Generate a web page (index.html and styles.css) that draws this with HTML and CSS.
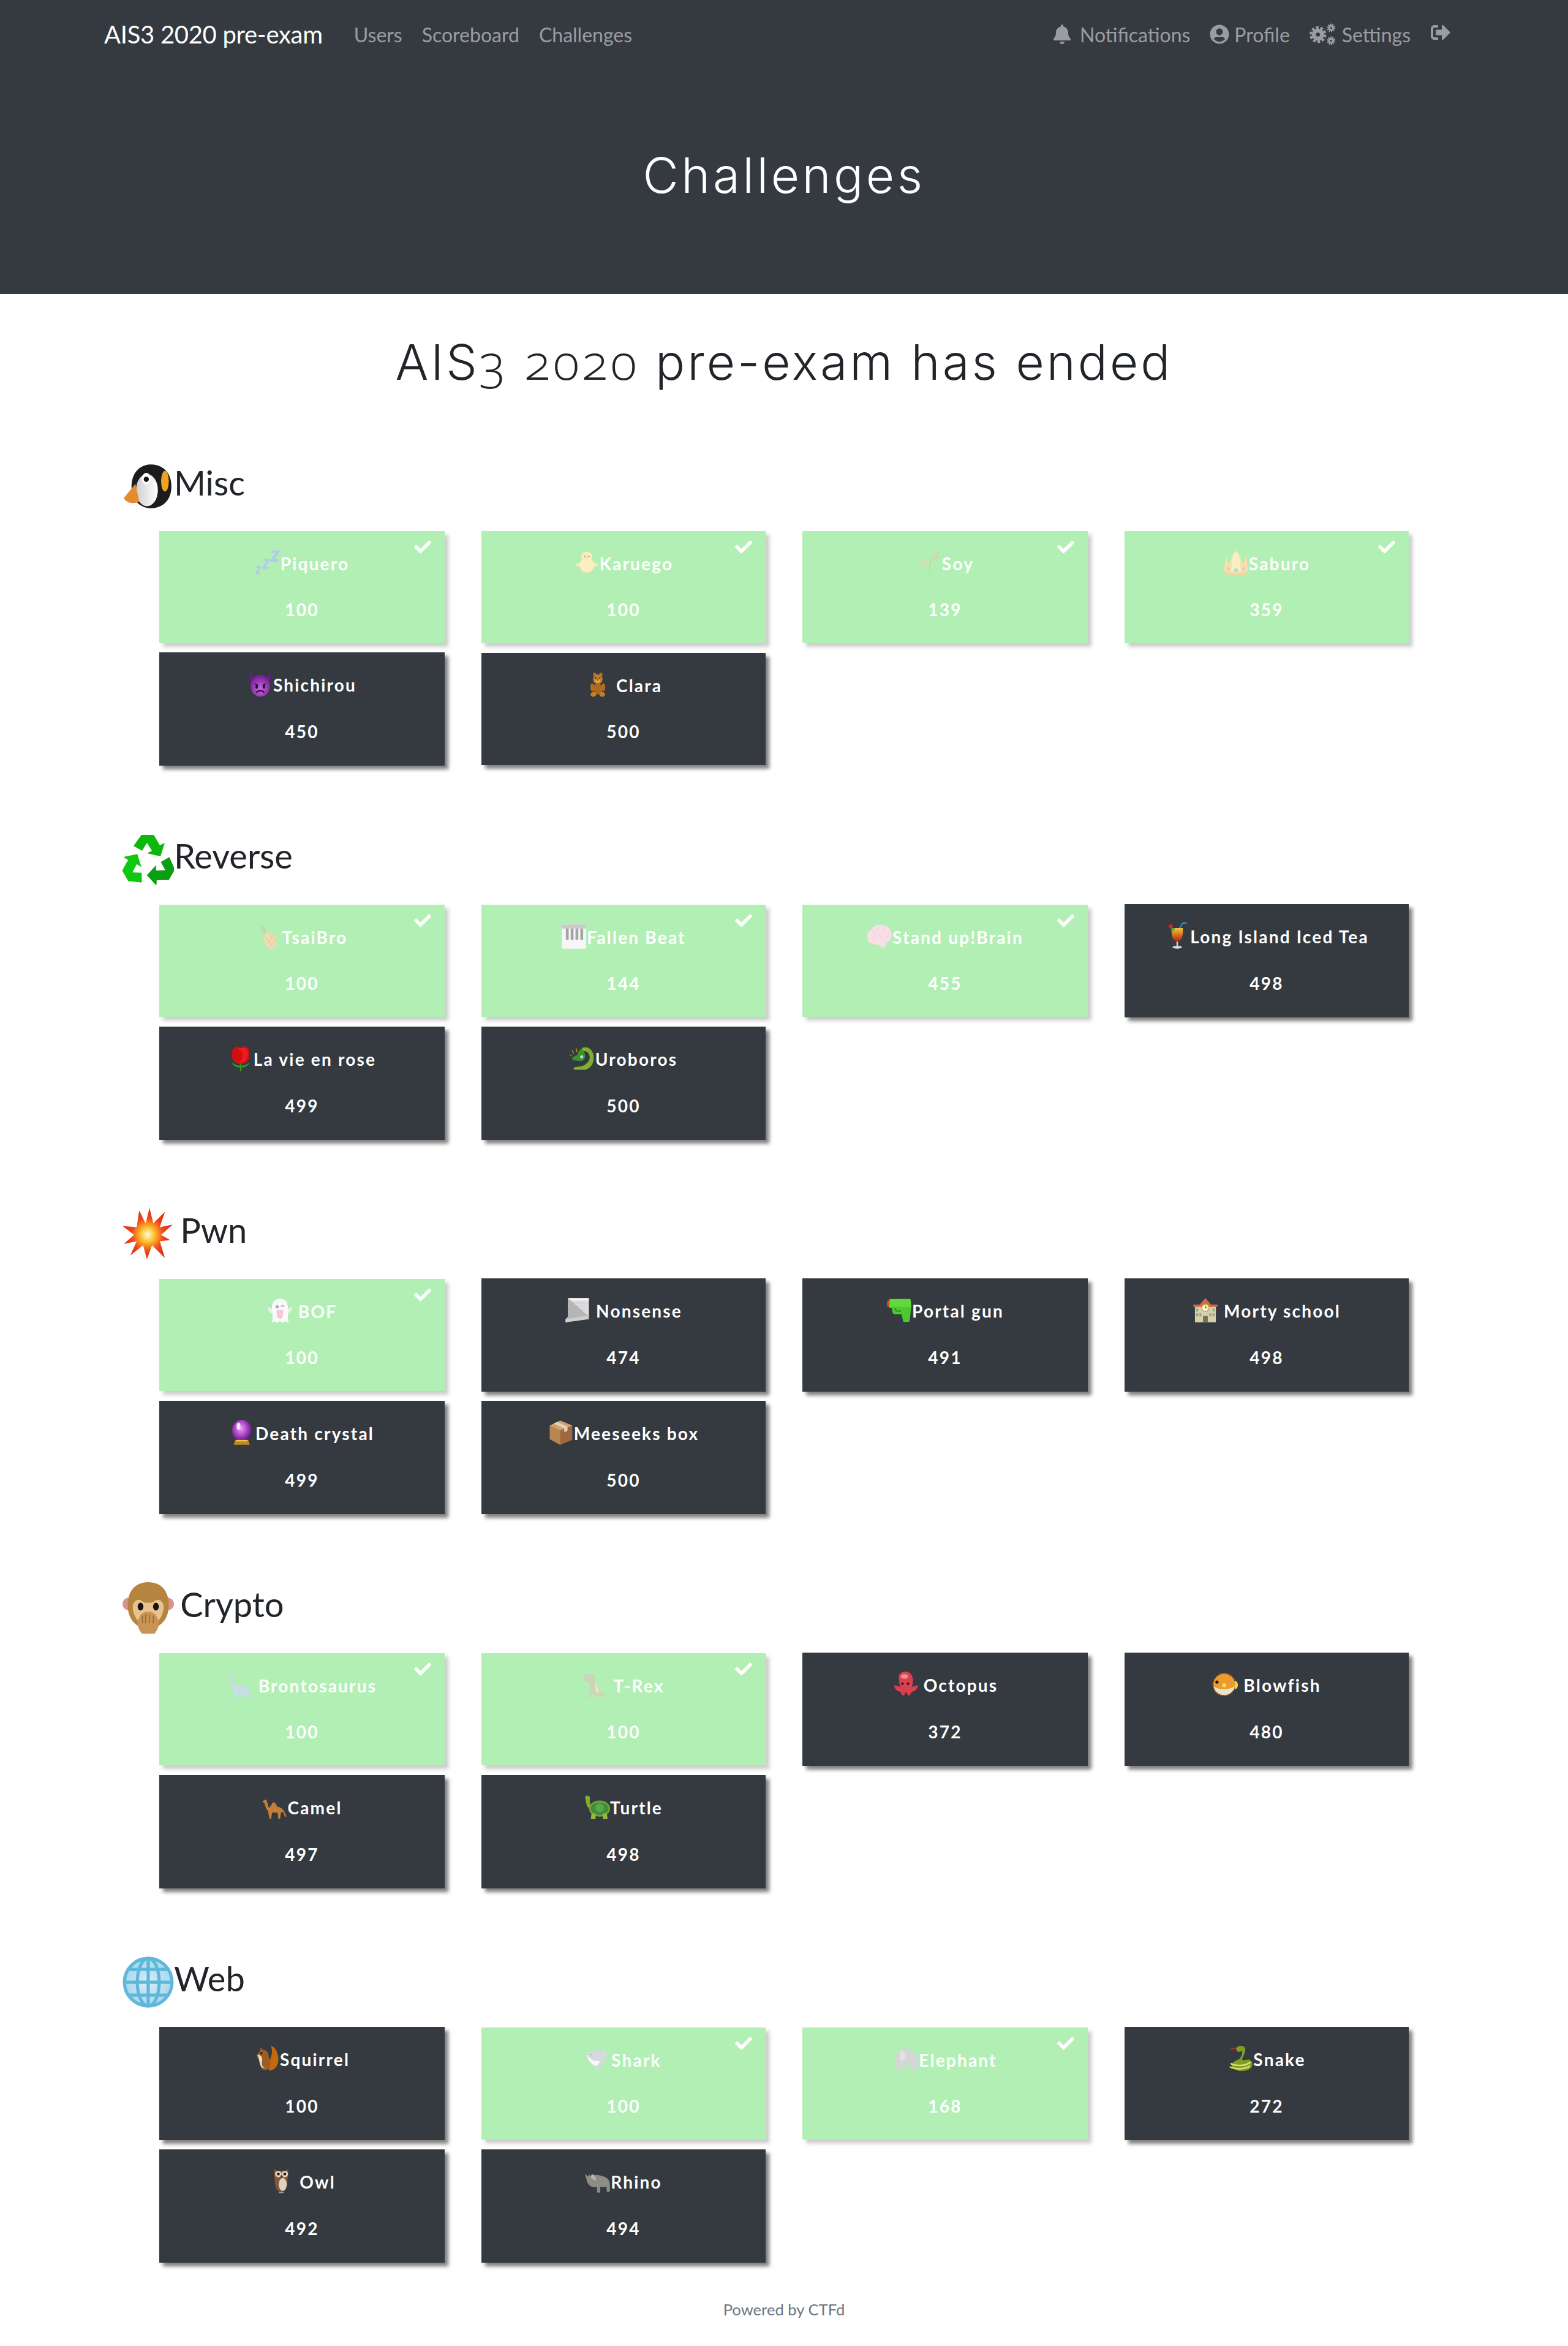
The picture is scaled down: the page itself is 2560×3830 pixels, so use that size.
FILE: index.html
```html
<!DOCTYPE html>
<html lang="en">

<head>
    <meta charset="UTF-8">
    <meta name="viewport" content="width=device-width, initial-scale=1.0">
    <title>Challenges</title>
    <link rel="stylesheet" href="styles.css">
</head>

<body>
    <svg class="sprites" xmlns="http://www.w3.org/2000/svg">
        <defs>
            <radialGradient id="gBall" cx="0.45" cy="0.4" r="0.6"><stop offset="0" stop-color="#e9a4ee"/><stop offset="0.6" stop-color="#a53cc0"/><stop offset="1" stop-color="#5a1a7c"/></radialGradient>
            <radialGradient id="gImp" cx="0.5" cy="0.65" r="0.6"><stop offset="0" stop-color="#c767d8"/><stop offset="1" stop-color="#7a1f9a"/></radialGradient>
            <linearGradient id="gDrink" x1="0" y1="0" x2="0" y2="1"><stop offset="0" stop-color="#f6c63a"/><stop offset="1" stop-color="#b3200c"/></linearGradient>
            <radialGradient id="gBoom" cx="0.5" cy="0.52" r="0.5"><stop offset="0" stop-color="#fffbe0"/><stop offset="0.28" stop-color="#fcc22c"/><stop offset="0.65" stop-color="#f0431a"/><stop offset="1" stop-color="#e22a12"/></radialGradient>
            <radialGradient id="gGlobe" cx="0.5" cy="0.5" r="0.55"><stop offset="0" stop-color="#d5edf7"/><stop offset="1" stop-color="#a5d6ec"/></radialGradient>
            <linearGradient id="gBelly" x1="0" y1="0" x2="1" y2="0"><stop offset="0" stop-color="#cfcfcf"/><stop offset="1" stop-color="#ffffff"/></linearGradient>
        </defs>
        <symbol id="i-check" viewBox="0 0 512 512"><path fill="currentColor" d="M173.898 439.404l-166.4-166.4c-9.997-9.997-9.997-26.206 0-36.204l36.203-36.204c9.997-9.998 26.207-9.998 36.204 0L192 312.69 432.095 72.596c9.997-9.997 26.207-9.997 36.204 0l36.203 36.204c9.997 9.997 9.997 26.206 0 36.204l-294.4 294.401c-9.998 9.997-26.207 9.997-36.204-.001z"/></symbol>
        <symbol id="i-bell" viewBox="0 0 448 512"><path fill="currentColor" d="M224 512c35.32 0 63.97-28.65 63.97-64H160.03c0 35.35 28.65 64 63.97 64zm215.39-149.71c-19.32-20.76-55.47-51.99-55.47-154.29 0-77.7-54.48-139.9-127.94-155.16V32c0-17.67-14.32-32-31.98-32s-31.98 14.33-31.98 32v20.84C118.56 68.1 64.08 130.3 64.08 208c0 102.3-36.15 133.53-55.47 154.29-6 6.45-8.66 14.16-8.61 21.71.11 16.4 12.98 32 32.1 32h383.8c19.12 0 32-15.6 32.1-32 .05-7.55-2.61-15.27-8.61-21.71z"/></symbol>
        <symbol id="i-user" viewBox="0 0 496 512"><path fill="currentColor" d="M248 8C111 8 0 119 0 256s111 248 248 248 248-111 248-248S385 8 248 8zm0 96c48.6 0 88 39.4 88 88s-39.4 88-88 88-88-39.4-88-88 39.4-88 88-88zm0 344c-58.7 0-111.3-26.6-146.5-68.2 18.8-35.4 55.6-59.8 98.5-59.8 2.4 0 4.8.4 7.1 1.1 13 4.2 26.6 6.9 40.9 6.9 14.3 0 28-2.7 40.9-6.9 2.3-.7 4.7-1.1 7.1-1.1 42.9 0 79.7 24.4 98.5 59.8C359.3 421.4 306.7 448 248 448z"/></symbol>
        <symbol id="i-cogs" viewBox="0 0 80 64"><g fill="none" stroke="currentColor"><circle cx="25" cy="33" r="12" stroke-width="12"/><circle cx="25" cy="33" r="21" stroke-width="8" stroke-dasharray="8 5.2"/><circle cx="64" cy="13" r="6" stroke-width="6"/><circle cx="64" cy="13" r="10.5" stroke-width="4.5" stroke-dasharray="3.6 2.9"/><circle cx="64" cy="51" r="6" stroke-width="6"/><circle cx="64" cy="51" r="10.5" stroke-width="4.5" stroke-dasharray="3.6 2.9"/></g></symbol>
        <symbol id="i-logout" viewBox="0 0 512 512"><path fill="currentColor" d="M497 273L329 441c-15 15-41 4.5-41-17v-96H152c-13.3 0-24-10.7-24-24v-96c0-13.3 10.7-24 24-24h136V88c0-21.4 25.9-32 41-17l168 168c9.3 9.4 9.3 24.6 0 34zM192 436v-40c0-6.6-5.4-12-12-12H96c-17.7 0-32-14.3-32-32V160c0-17.7 14.3-32 32-32h84c6.6 0 12-5.4 12-12V76c0-6.6-5.4-12-12-12H96c-53 0-96 43-96 96v192c0 53 43 96 96 96h84c6.6 0 12-5.4 12-12z"/></symbol>

        <symbol id="e-penguin" viewBox="0 0 80 68"><path d="M14 34C14 12 28 0 44 0c18 0 32 12 32 34S62 68 44 68C28 68 14 56 14 34z" fill="#1c1c1e"/><ellipse cx="38" cy="40" rx="17" ry="25" fill="url(#gBelly)"/><ellipse cx="37" cy="22" rx="7" ry="9" fill="#fff"/><circle cx="37" cy="23" r="4" fill="#111"/><ellipse cx="66" cy="26" rx="6" ry="16" fill="#f0a21e"/><path d="M20 30L2 52c4 8 14 10 24 6z" fill="#e48b2e"/></symbol>
        <symbol id="e-recycle" viewBox="0 0 80 84"><g fill="#0cb80c"><path d="M29 2h20l10 17 8-4-7 22-22-5 8-4-8-13-8 13-14-8z"/><path d="M29 2h20l10 17 8-4-7 22-22-5 8-4-8-13-8 13-14-8z" transform="rotate(120 40 46)" fill="#0a9e12"/><path d="M29 2h20l10 17 8-4-7 22-22-5 8-4-8-13-8 13-14-8z" transform="rotate(240 40 46)" fill="#10c810"/></g></symbol>
        <symbol id="e-boom" viewBox="0 0 80 80"><path d="M26 4L36 24 42 0l6 24L66 6 58 30l20-4L60 42l14 8-16 2 8 26-20-20-8 22-6-22L12 74l10-22-20 4 16-14L0 28l22 2z" fill="url(#gBoom)"/></symbol>
        <symbol id="e-monkey" viewBox="0 0 80 80"><circle cx="10" cy="34" r="10" fill="#d9938a"/><circle cx="70" cy="34" r="10" fill="#d9938a"/><path d="M40 0c22 0 32 16 32 36S60 72 40 72 8 56 8 36 18 0 40 0z" fill="#b5853f"/><path d="M16 38c0-9 9-13 14-9 4 3 6 3 10 3s6 0 10-3c5-4 14 0 14 9 0 14-10 30-24 30S16 52 16 38z" fill="#e7c48f"/><ellipse cx="28" cy="38" rx="4.5" ry="6" fill="#161310"/><ellipse cx="52" cy="38" rx="4.5" ry="6" fill="#161310"/><path d="M24 60c4-12 9-14 16-14s12 2 16 14c2 8-2 14-6 20H30c-4-6-8-12-6-20z" fill="#c99456"/><path d="M36 50v14M42 50v14M31 52v12M48 52v12" stroke="#9b6a34" stroke-width="1.6"/></symbol>
        <symbol id="e-globe" viewBox="0 0 80 80"><circle cx="40" cy="40" r="38" fill="url(#gGlobe)"/><g fill="none" stroke="#5fb7d9" stroke-width="5"><circle cx="40" cy="40" r="37"/><ellipse cx="40" cy="40" rx="17" ry="37"/><path d="M40 3v74M3 40h74M9 20h62M9 60h62"/></g></symbol>

        <symbol id="e-zzz" viewBox="0 0 64 64"><g fill="none" stroke="#3f74ea" stroke-linejoin="miter"><path d="M4 42h9L4 58h9" stroke-width="4"/><path d="M22 24h12L22 44h12" stroke-width="5"/><path d="M42 4h16L42 26h16" stroke-width="6"/></g></symbol>
        <symbol id="e-chick" viewBox="0 0 64 64"><circle cx="32" cy="18" r="14" fill="#fdcf5a"/><ellipse cx="32" cy="38" rx="18" ry="18" fill="#fdd468"/><path d="M14 30L2 38l14 4zM50 30l12 8-14 4z" fill="#fbc64c"/><circle cx="27" cy="16" r="2" fill="#3a2a12"/><circle cx="37" cy="16" r="2" fill="#3a2a12"/><path d="M29 20h6l-3 4z" fill="#ef8a1c"/><path d="M24 56v6h-6M40 56v6h6" stroke="#e2901f" stroke-width="2.5" fill="none"/></symbol>
        <symbol id="e-seedling" viewBox="0 0 64 64"><path d="M34 60c-2-14-2-24 2-34" stroke="#6e9e2a" stroke-width="3" fill="none"/><path d="M36 28C38 14 48 4 60 2c0 14-10 26-24 26z" fill="#7faa2d"/><path d="M32 32C24 20 14 22 4 34c8 8 20 8 28-2z" fill="#8fb93a"/></symbol>
        <symbol id="e-crown" viewBox="0 0 64 64"><path d="M6 14l8 22L24 12l8-10 8 10 10 24 8-22 4 40C50 62 14 62 2 54z" fill="#e9b233"/><path d="M24 12l8-10 8 10 4 40H20z" fill="#f7d766"/><path d="M2 50c12 12 48 12 60 0l-1 8C48 66 16 66 3 58z" fill="#d59820"/><circle cx="32" cy="50" r="5" fill="#2fb4b0"/><circle cx="13" cy="46" r="3.5" fill="#e04fa8"/><circle cx="51" cy="46" r="3.5" fill="#e04fa8"/></symbol>
        <symbol id="e-imp" viewBox="0 0 64 64"><path d="M6 2l10 14h32L58 2l-2 26H8z" fill="#6b1a8a"/><ellipse cx="32" cy="36" rx="24" ry="27" fill="url(#gImp)"/><path d="M16 28l11 6-3 3zM48 28l-11 6 3 3z" fill="#2b0a3c"/><ellipse cx="23" cy="38" rx="3" ry="5" fill="#2b0a3c"/><ellipse cx="41" cy="38" rx="3" ry="5" fill="#2b0a3c"/><path d="M22 53c4-6 16-6 20 0" stroke="#2b0a3c" stroke-width="3" fill="none"/></symbol>
        <symbol id="e-teddy" viewBox="0 0 64 64"><circle cx="24" cy="6" r="4" fill="#b26d1f"/><circle cx="40" cy="6" r="4" fill="#b26d1f"/><circle cx="32" cy="18" r="12" fill="#c47f28"/><ellipse cx="32" cy="22" rx="5.5" ry="4" fill="#e8b568"/><circle cx="27" cy="15" r="1.6" fill="#20130a"/><circle cx="37" cy="15" r="1.6" fill="#20130a"/><circle cx="32" cy="20" r="1.6" fill="#20130a"/><ellipse cx="32" cy="42" rx="12" ry="14" fill="#a9691f"/><ellipse cx="18" cy="38" rx="4.5" ry="10" fill="#b26d1f"/><ellipse cx="46" cy="38" rx="4.5" ry="10" fill="#b26d1f"/><ellipse cx="21" cy="56" rx="7" ry="6" fill="#c47f28"/><ellipse cx="43" cy="56" rx="7" ry="6" fill="#c47f28"/></symbol>
        <symbol id="e-pineapple" viewBox="0 0 64 64"><path d="M12 2c6 4 10 12 12 20l-6 4C14 20 12 10 12 2z" fill="#5f9a2e"/><path d="M6 12c6 2 12 8 14 14l-4 2C10 24 8 18 6 12z" fill="#76ad3a"/><ellipse cx="34" cy="42" rx="15" ry="21" fill="#e0a83c" transform="rotate(-14 34 42)"/><path d="M20 32l24 26M30 24l18 22M24 52L44 28M30 60L50 38" stroke="#b57c1f" stroke-width="1.6"/></symbol>
        <symbol id="e-piano" viewBox="0 0 64 64"><rect x="2" y="2" width="60" height="60" rx="2" fill="#e9e9e9"/><rect x="2" y="2" width="60" height="10" fill="#7a7a7a"/><g fill="#1d1d1d"><rect x="12" y="12" width="7" height="28"/><rect x="24" y="12" width="7" height="28"/><rect x="36" y="12" width="7" height="28"/><rect x="48" y="12" width="7" height="28"/></g></symbol>
        <symbol id="e-brain" viewBox="0 0 64 64"><path d="M12 14C18 4 30 0 42 4c12 2 20 12 20 24 0 10-6 18-14 20 0 6-2 12-8 12-4 0-6-4-6-8-8 2-18 0-24-4C2 44 0 34 2 26c1-6 5-10 10-12z" fill="#f0b1c3"/><path d="M14 18c6 2 8 8 6 14M28 8c2 6 0 12-4 14M44 10c-2 6 0 10 4 12M12 38c6 0 10-2 12-6M30 30c6 0 10 4 10 10M52 30c-4 2-6 6-4 12" fill="none" stroke="#d9869e" stroke-width="2"/></symbol>
        <symbol id="e-drink" viewBox="0 0 64 64"><path d="M38 12L46 0h10" stroke="#2e8fd3" stroke-width="3" fill="none"/><circle cx="16" cy="8" r="5" fill="#d32a1e"/><path d="M18 12h28c1 18-2 32-14 34C20 44 17 30 18 12z" fill="url(#gDrink)"/><path d="M18 12h8l-2 8h-6z" fill="#5ea734"/><rect x="30" y="46" width="4" height="12" fill="#c9c9c9"/><ellipse cx="32" cy="60" rx="12" ry="3.5" fill="#d9d9d9"/></symbol>
        <symbol id="e-rose" viewBox="0 0 64 64"><path d="M12 8l10-6 10 4 10-6 10 8 2 14c0 14-8 24-22 24S10 36 10 22z" fill="#d10f10"/><path d="M22 6c8 2 14 8 14 18s-4 18-10 22c12-2 24-10 24-24 0-8-2-14-6-16z" fill="#ef1b1c"/><path d="M32 46v18" stroke="#4f8f1d" stroke-width="3"/><path d="M32 50c-8 0-14-2-22-8 2 8 12 14 22 12zM32 50c8 0 14-2 22-8-2 8-12 14-22 12z" fill="#2f9b22"/></symbol>
        <symbol id="e-dragon" viewBox="0 0 64 64"><path d="M38 4c14 0 22 12 22 26s-8 28-22 30H14c-4 0-6-4-2-6 10-2 20-2 26-6 8-6 12-12 12-18 0-10-6-16-12-16-6 0-10-2-8-6 1-3 4-4 8-4z" fill="#7faf2e"/><path d="M30 8c-6 2-10 10-10 14L6 30l2 6 14 2c8 2 14-2 16-8s0-14-8-22z" fill="#3f8f2c"/><circle cx="30" cy="28" r="4" fill="#8fe6f0"/><path d="M4 26l-4-4M10 20l-4-8M18 16l-2-10" stroke="#d68d22" stroke-width="2"/></symbol>
        <symbol id="e-ghost" viewBox="0 0 64 64"><path d="M12 26C12 10 20 2 32 2s20 8 20 24v26l2 10-8-4-7 4-7-4-7 4-7-4-6 4 2-10z" fill="#f2f2f2"/><path d="M12 28L2 22c0 8 4 14 10 16zM52 28l10-6c0 8-4 14-10 16z" fill="#dedede"/><circle cx="25" cy="22" r="4" fill="#333"/><path d="M35 22c2-4 6-4 8 0" stroke="#333" stroke-width="2.5" fill="none"/><path d="M24 30h16v10c0 8-4 12-8 12s-8-4-8-12z" fill="#e878a4"/></symbol>
        <symbol id="e-scroll" viewBox="0 0 64 64"><path d="M8 2h52v52H8z" fill="#dedede"/><path d="M8 2h52v6H8z" fill="#f1f1f1"/><path d="M16 14h36M16 22h36M16 30h36M16 38h26" stroke="#c8c8c8" stroke-width="2"/><path d="M8 2v46L2 54v8l58-8-2-8z" fill="#b5b5b5"/><path d="M2 54l54-8 4 8-58 8z" fill="#cfcfcf"/></symbol>
        <symbol id="e-pistol" viewBox="0 0 64 64"><rect x="2" y="8" width="8" height="16" rx="3" fill="#c4591f"/><path d="M8 4h52c2 8 2 16 2 22H8z" fill="#5fd93b"/><path d="M36 24h26l-4 36c-6 2-12 2-16 0l-4-18H22c-6 0-8-6-8-18z" fill="#4cc92e"/><path d="M22 26c0 8 6 10 14 8" stroke="#2e8b1d" stroke-width="3" fill="none"/></symbol>
        <symbol id="e-school" viewBox="0 0 64 64"><rect x="6" y="20" width="52" height="42" fill="#d9cfa4"/><path d="M2 18h60v6H2zM18 18l14-16 14 16z" fill="#cf6a44"/><circle cx="32" cy="26" r="9" fill="#fff6d0" stroke="#c6a24a" stroke-width="2"/><path d="M32 20v6h5" stroke="#444" stroke-width="1.5" fill="none"/><rect x="26" y="46" width="12" height="16" fill="#6e7464"/><g fill="#86a0a8"><rect x="9" y="28" width="5" height="7"/><rect x="50" y="28" width="5" height="7"/><rect x="9" y="40" width="5" height="7"/><rect x="50" y="40" width="5" height="7"/><rect x="17" y="40" width="5" height="7"/><rect x="42" y="40" width="5" height="7"/></g></symbol>
        <symbol id="e-ball" viewBox="0 0 64 64"><ellipse cx="30" cy="27" rx="24" ry="27" fill="url(#gBall)"/><ellipse cx="22" cy="16" rx="5" ry="9" fill="#f7def9"/><path d="M14 50h32l4 12H10z" fill="#c08a1c"/><path d="M16 52h28" stroke="#f1cf5c" stroke-width="3"/></symbol>
        <symbol id="e-box" viewBox="0 0 64 64"><path d="M30 2L60 14v36L30 62 4 48V14z" fill="#9c6a3c"/><path d="M4 14l26 12v36L4 48z" fill="#b98552"/><path d="M30 2L60 14 30 26 4 14z" fill="#d2a273"/><path d="M14 9l26 12v10l8-4V17L22 5z" fill="#e5d2b8"/></symbol>
        <symbol id="e-sauropod" viewBox="0 0 64 64"><path d="M4 2c6 0 8 4 8 10 0 12 4 18 12 22 10-4 22 0 28 10l10 18c-6 0-10-4-14-10v10h-8l-2-10H26l-2 10h-8V42C8 34 6 22 6 10L2 6z" fill="#7fa6c7"/></symbol>
        <symbol id="e-trex" viewBox="0 0 64 64"><path d="M6 4h18c8 0 10 6 8 14-1 6 2 10 6 14 4 6 6 12 6 16l16 10c-6 4-14 4-22-2l-2 4 4 2H28l2-8-6 2-2 6h-10l6-6V36L14 24H6c-4-6-4-14 0-20z" fill="#7c9a52"/><path d="M30 26c6 4 10 12 12 22l-8 4z" fill="#cbbf4b"/></symbol>
        <symbol id="e-octopus" viewBox="0 0 64 64"><path d="M32 0c13 0 19 10 19 22 0 8-2 12-2 16l12-4c3 0 3 4 1 6-3 6-8 10-14 10-2 6-6 12-10 8l-2-6-4 0-2 6c-4 4-8-2-10-8-6 0-11-4-14-10-2-2-2-6 1-6l12 4c0-4-2-8-2-16C13 10 19 0 32 0z" fill="#d9414f"/><ellipse cx="30" cy="12" rx="9" ry="6" fill="#f08a93"/><circle cx="25" cy="30" r="3" fill="#2c0f12"/><circle cx="39" cy="30" r="3" fill="#2c0f12"/></symbol>
        <symbol id="e-blowfish" viewBox="0 0 64 64"><circle cx="30" cy="32" r="27" fill="#ef9a2e" stroke="#c9781d" stroke-width="4" stroke-dasharray="2 3"/><path d="M4 36c8 10 40 10 52 0-2 14-14 22-26 22S6 50 4 36z" fill="#e8e2d2"/><circle cx="12" cy="26" r="4" fill="#1c140a"/><path d="M56 22c6 2 8 6 8 12s-4 10-8 10z" fill="#efd640"/><circle cx="30" cy="34" r="5" fill="#f5dc5c"/></symbol>
        <symbol id="e-camel" viewBox="0 0 64 64"><path d="M2 18l6-4h4l2 6 4 14c6-2 8-14 12-14s6 6 10 12c6 0 12 4 16 10 2 4 4 10 6 14h-4l-4-12c-2 0-4 2-6 2l-2 16h-4l-2-16H26l-2 16h-4L16 42c-4-4-6-10-8-18z" fill="#c47f36"/></symbol>
        <symbol id="e-turtle" viewBox="0 0 64 64"><path d="M2 8c0-6 12-6 12 2 0 8-2 14 4 20l-8 4C4 28 4 16 2 8z" fill="#83ae2c"/><ellipse cx="38" cy="36" rx="24" ry="18" fill="#3f8c3a" stroke="#74a92c" stroke-width="4"/><path d="M28 28l10-6 10 6v12l-10 6-10-6z" fill="#58a848"/><path d="M18 48h10v14H16zM46 48h10l2 14H46z" fill="#96ba36"/></symbol>
        <symbol id="e-squirrel" viewBox="0 0 64 64"><path d="M38 62C50 60 62 50 60 28 58 12 50 2 42 0c4 14 2 24-2 32-2 8-6 20-2 30z" fill="#c2680f"/><path d="M14 14l2-10 6 6c8 0 14 6 14 16 4 10 6 22 2 30-2 4-16 6-20 0-4-6 0-14 0-20C10 34 4 26 8 20z" fill="#9a5e24"/><path d="M8 22c6 0 12 4 12 10s-4 20 6 22c-6 2-10-2-12-10-2-8-2-14-6-22z" fill="#ead9bd"/><circle cx="18" cy="18" r="2.5" fill="#1c140a"/></symbol>
        <symbol id="e-shark" viewBox="0 0 64 64"><path d="M2 20C12 10 26 6 42 12l8-8 2 18c0 12-6 20-18 24l-2 16-8-14C14 46 6 32 2 20z" fill="#9aa3ab"/><path d="M2 20c10 12 22 18 34 16-2 6-6 10-10 12C14 46 6 32 2 20z" fill="#eef0f2"/><circle cx="14" cy="20" r="1.8" fill="#222"/></symbol>
        <symbol id="e-elephant" viewBox="0 0 64 64"><path d="M24 6c14-4 30 4 36 20v34H48V46H32v14H20V44c-4 0-6 4-6 10 0 6-10 8-12 2 6 0 6-10 6-22C6 20 12 10 24 6z" fill="#9b9b9b"/><path d="M18 10c8 0 14 8 12 18-2 6-8 8-12 6z" fill="#bcbcbc"/></symbol>
        <symbol id="e-snake" viewBox="0 0 64 64"><path d="M34 0c8 0 12 6 10 14-2 10-10 18-6 22l16-2c8 4 10 12 6 18-4 8-18 12-32 10-12-2-20-8-16-18 4-6 12-8 18-12 6-6 8-14 6-20-4 4-12 4-14-2-2-6 4-10 12-10z" fill="#7f9d22"/><path d="M8 44c10 6 36 8 50-4M6 52c12 6 34 8 50-2" stroke="#d8e070" stroke-width="4" fill="none"/><path d="M20 6l-12 2" stroke="#c83a3a" stroke-width="2"/></symbol>
        <symbol id="e-owl" viewBox="0 0 64 64"><path d="M14 2l8 4h20l8-4-2 26c0 14-4 30-16 30S16 42 16 28z" fill="#87563a"/><circle cx="25" cy="14" r="8" fill="#e3d4b8"/><circle cx="41" cy="14" r="8" fill="#e3d4b8"/><circle cx="25" cy="14" r="3.5" fill="#20160e"/><circle cx="41" cy="14" r="3.5" fill="#20160e"/><path d="M30 18h6l-3 6z" fill="#3a2a1a"/><ellipse cx="36" cy="40" rx="10" ry="16" fill="#dfd2bc"/><path d="M26 60h12" stroke="#a99e8c" stroke-width="3"/></symbol>
        <symbol id="e-rhino" viewBox="0 0 64 64"><path d="M0 14l8 6 4-6 2 6c8-6 22-4 32 0 10 2 16 10 16 22v16h-8V46H38v14h-8V46H18c-6-2-12-8-14-18z" fill="#8f8b85"/><path d="M18 14c6 2 10 8 10 16-6 0-12-4-14-10z" fill="#b5b0a9"/></symbol>
    </svg>

    <nav class="navbar">
        <a class="brand" href="#">AIS3 2020 pre-exam</a>
        <ul class="nav-links">
            <li><a href="#">Users</a></li>
            <li><a href="#">Scoreboard</a></li>
            <li><a href="#">Challenges</a></li>
        </ul>
        <ul class="nav-links nav-right">
            <li><a href="#"><svg class="nav-icon bell"><use href="#i-bell"/></svg>Notifications</a></li>
            <li><a href="#"><svg class="nav-icon"><use href="#i-user"/></svg>Profile</a></li>
            <li><a href="#"><svg class="nav-icon cogs"><use href="#i-cogs"/></svg>Settings</a></li>
            <li><a href="#"><svg class="nav-icon logout"><use href="#i-logout"/></svg></a></li>
        </ul>
    </nav>

    <header class="hero">
        <h1>Challenges</h1>
    </header>

    <main class="container">
        <h2 class="ended">AIS<span class="old-nums">3</span> <span class="old-nums">2020</span> pre-exam has ended</h2>

        <section class="category">
            <h3><svg class="cat-emoji"><use href="#e-penguin"/></svg>Misc</h3>
            <div class="chal-grid">
                <button class="chal solved"><svg class="chal-check"><use href="#i-check"/></svg><span class="chal-name"><svg class="emoji"><use href="#e-zzz"/></svg>Piquero</span><span class="chal-value">100</span></button>
                <button class="chal solved"><svg class="chal-check"><use href="#i-check"/></svg><span class="chal-name"><svg class="emoji"><use href="#e-chick"/></svg>Karuego</span><span class="chal-value">100</span></button>
                <button class="chal solved"><svg class="chal-check"><use href="#i-check"/></svg><span class="chal-name"><svg class="emoji"><use href="#e-seedling"/></svg>Soy</span><span class="chal-value">139</span></button>
                <button class="chal solved"><svg class="chal-check"><use href="#i-check"/></svg><span class="chal-name"><svg class="emoji"><use href="#e-crown"/></svg>Saburo</span><span class="chal-value">359</span></button>
                <button class="chal"><span class="chal-name"><svg class="emoji"><use href="#e-imp"/></svg>Shichirou</span><span class="chal-value">450</span></button>
                <button class="chal short"><span class="chal-name"><svg class="emoji"><use href="#e-teddy"/></svg> Clara</span><span class="chal-value">500</span></button>
            </div>
        </section>

        <section class="category">
            <h3><svg class="cat-emoji"><use href="#e-recycle"/></svg>Reverse</h3>
            <div class="chal-grid">
                <button class="chal solved"><svg class="chal-check"><use href="#i-check"/></svg><span class="chal-name"><svg class="emoji"><use href="#e-pineapple"/></svg>TsaiBro</span><span class="chal-value">100</span></button>
                <button class="chal solved"><svg class="chal-check"><use href="#i-check"/></svg><span class="chal-name"><svg class="emoji"><use href="#e-piano"/></svg>Fallen Beat</span><span class="chal-value">144</span></button>
                <button class="chal solved"><svg class="chal-check"><use href="#i-check"/></svg><span class="chal-name"><svg class="emoji"><use href="#e-brain"/></svg>Stand up!Brain</span><span class="chal-value">455</span></button>
                <button class="chal"><span class="chal-name"><svg class="emoji"><use href="#e-drink"/></svg>Long Island Iced Tea</span><span class="chal-value">498</span></button>
                <button class="chal"><span class="chal-name"><svg class="emoji"><use href="#e-rose"/></svg>La vie en rose</span><span class="chal-value">499</span></button>
                <button class="chal"><span class="chal-name"><svg class="emoji"><use href="#e-dragon"/></svg>Uroboros</span><span class="chal-value">500</span></button>
            </div>
        </section>

        <section class="category">
            <h3><svg class="cat-emoji"><use href="#e-boom"/></svg> Pwn</h3>
            <div class="chal-grid">
                <button class="chal solved"><svg class="chal-check"><use href="#i-check"/></svg><span class="chal-name"><svg class="emoji"><use href="#e-ghost"/></svg> BOF</span><span class="chal-value">100</span></button>
                <button class="chal"><span class="chal-name"><svg class="emoji"><use href="#e-scroll"/></svg> Nonsense</span><span class="chal-value">474</span></button>
                <button class="chal"><span class="chal-name"><svg class="emoji"><use href="#e-pistol"/></svg>Portal gun</span><span class="chal-value">491</span></button>
                <button class="chal"><span class="chal-name"><svg class="emoji"><use href="#e-school"/></svg> Morty school</span><span class="chal-value">498</span></button>
                <button class="chal"><span class="chal-name"><svg class="emoji"><use href="#e-ball"/></svg>Death crystal</span><span class="chal-value">499</span></button>
                <button class="chal"><span class="chal-name"><svg class="emoji"><use href="#e-box"/></svg>Meeseeks box</span><span class="chal-value">500</span></button>
            </div>
        </section>

        <section class="category">
            <h3><svg class="cat-emoji"><use href="#e-monkey"/></svg> Crypto</h3>
            <div class="chal-grid">
                <button class="chal solved"><svg class="chal-check"><use href="#i-check"/></svg><span class="chal-name"><svg class="emoji"><use href="#e-sauropod"/></svg> Brontosaurus</span><span class="chal-value">100</span></button>
                <button class="chal solved"><svg class="chal-check"><use href="#i-check"/></svg><span class="chal-name"><svg class="emoji"><use href="#e-trex"/></svg> T-Rex</span><span class="chal-value">100</span></button>
                <button class="chal"><span class="chal-name"><svg class="emoji"><use href="#e-octopus"/></svg> Octopus</span><span class="chal-value">372</span></button>
                <button class="chal"><span class="chal-name"><svg class="emoji"><use href="#e-blowfish"/></svg> Blowfish</span><span class="chal-value">480</span></button>
                <button class="chal"><span class="chal-name"><svg class="emoji"><use href="#e-camel"/></svg>Camel</span><span class="chal-value">497</span></button>
                <button class="chal"><span class="chal-name"><svg class="emoji"><use href="#e-turtle"/></svg>Turtle</span><span class="chal-value">498</span></button>
            </div>
        </section>

        <section class="category">
            <h3><svg class="cat-emoji"><use href="#e-globe"/></svg>Web</h3>
            <div class="chal-grid">
                <button class="chal"><span class="chal-name"><svg class="emoji"><use href="#e-squirrel"/></svg>Squirrel</span><span class="chal-value">100</span></button>
                <button class="chal solved"><svg class="chal-check"><use href="#i-check"/></svg><span class="chal-name"><svg class="emoji"><use href="#e-shark"/></svg>Shark</span><span class="chal-value">100</span></button>
                <button class="chal solved"><svg class="chal-check"><use href="#i-check"/></svg><span class="chal-name"><svg class="emoji"><use href="#e-elephant"/></svg>Elephant</span><span class="chal-value">168</span></button>
                <button class="chal"><span class="chal-name"><svg class="emoji"><use href="#e-snake"/></svg>Snake</span><span class="chal-value">272</span></button>
                <button class="chal"><span class="chal-name"><svg class="emoji"><use href="#e-owl"/></svg> Owl</span><span class="chal-value">492</span></button>
                <button class="chal"><span class="chal-name"><svg class="emoji"><use href="#e-rhino"/></svg>Rhino</span><span class="chal-value">494</span></button>
            </div>
        </section>
    </main>

    <footer class="footer">Powered by CTFd</footer>
</body>

</html>
```

FILE: styles.css
```css
body {
    margin: 0;
    font-family: "Lato", "Liberation Sans", sans-serif;
    color: #212529;
    background: #fff;
}

.sprites {
    display: block;
    width: 0;
    height: 0;
}

a {
    color: inherit;
    text-decoration: none;
}

ul {
    list-style: none;
    margin: 0;
    padding: 0;
}

.navbar {
    display: flex;
    align-items: center;
    height: 112px;
    padding: 0 170px;
    background: #343a40;
}

.brand {
    font-size: 40px;
    letter-spacing: -0.3px;
    color: #fff;
    margin-right: 35px;
}

.nav-links {
    display: flex;
    font-size: 32px;
    color: #9a9da0;
}

.nav-links a {
    display: flex;
    align-items: center;
    padding: 0 16px;
}

.nav-right {
    margin-left: auto;
    margin-right: 5px;
}

.nav-icon {
    width: 32px;
    height: 32px;
    margin-right: 8px;
    fill: currentColor;
}

.nav-icon.bell {
    width: 32px;
    margin-right: 13px;
}

.nav-icon.cogs {
    width: 44px;
    height: 38px;
    margin-right: 9px;
}

.nav-icon.logout {
    width: 34px;
    margin-right: 0;
}

.hero {
    background: #343a40;
    height: 368px;
    padding-top: 126px;
    box-sizing: border-box;
}

.hero h1 {
    margin: 0;
    font-family: "Inter", "Lato", sans-serif;
    font-size: 80px;
    line-height: 96px;
    font-weight: 300;
    color: #fff;
    text-align: center;
    letter-spacing: 4.5px;
}

.container {
    padding: 0 170px;
}

.ended {
    margin: 61px 0 0;
    font-family: "Inter", "Lato", sans-serif;
    font-size: 80px;
    line-height: 96px;
    font-weight: 300;
    text-align: center;
    letter-spacing: 4px;
}

.old-nums {
    font-family: "Open Sans", sans-serif;
    font-feature-settings: "onum";
}

.category {
    margin-bottom: 96px;
}

.ended + .category {
    margin-top: 98px;
}

.category h3 {
    display: flex;
    align-items: center;
    height: 100px;
    margin: 0 0 30px 30px;
    font-size: 56px;
    font-weight: 400;
    white-space: pre;
    word-spacing: -4px;
}

.cat-emoji {
    width: 84px;
    height: 84px;
    margin-top: 14px;
}

.chal-grid {
    display: grid;
    grid-template-columns: 466px 464px 466px 464px;
    column-gap: 60px;
    row-gap: 15px;
    align-items: center;
    margin-left: 90px;
}

.chal {
    position: relative;
    display: block;
    width: 100%;
    padding: 29px 0 34px;
    border: none;
    background: #343a40;
    color: #fff;
    font-family: inherit;
    font-size: 28px;
    font-weight: 700;
    letter-spacing: 2.2px;
    text-align: center;
    box-shadow: 6px 6px 6px #808080;
}

.chal.solved {
    padding-bottom: 33px;
    background: #41d946;
    opacity: 0.4;
}

.chal.short {
    padding-bottom: 33px;
}

.chal-check {
    position: absolute;
    top: 12px;
    right: 22px;
    width: 28px;
    height: 28px;
    color: #fff;
}

.chal-name,
.chal-value {
    display: block;
    height: 44px;
    line-height: 44px;
    white-space: pre;
}

.chal-value {
    margin-top: 34px;
}

.solved .chal-value,
.short .chal-value {
    margin-top: 33px;
}

.emoji {
    width: 42px;
    height: 46px;
    vertical-align: -11px;
}

.footer {
    margin-top: -38px;
    font-size: 25.6px;
    line-height: 36px;
    color: #6c757d;
    text-align: center;
}
```
